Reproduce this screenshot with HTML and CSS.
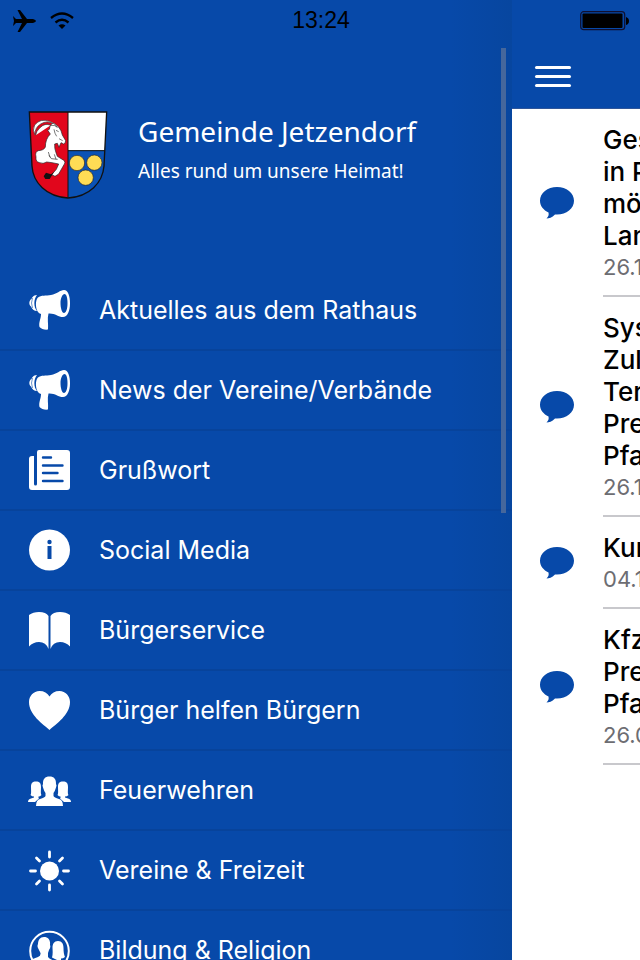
FILE: index.html
```html
<!DOCTYPE html>
<html lang="de">
<head>
    <meta charset="UTF-8">
    <meta name="viewport" content="width=device-width, initial-scale=1.0">
    <title>Gemeinde Jetzendorf</title>
    <link rel="stylesheet" href="styles.css">
</head>
<body>
    <!-- Icons, die mehrfach verwendet werden -->
    <svg class="sprite" aria-hidden="true">
        <symbol id="icon-megaphone" viewBox="0 0 42 42">
            <path fill="currentColor" fill-rule="evenodd" d="M36 1C32 1 29 5 23 6C18 7 13 6 10 8.500C7 11 7.500 20 10 23Q11 24.500 13 25C13 30 10.500 33 11.500 38C13 40 17 41 20 40.500C20.500 35 19 30 20.500 24.500C27 24 30 28 35 28C39.500 28 42 22 42 14.500C42 7 40 1 36 1ZM36.500 5C38.500 5 39.500 9 39.500 14.500C39.500 20 38 24 36 24C34 24 32.500 19 32.500 14C32.500 9 34.500 5 36.500 5Z"/>
            <path fill="currentColor" d="M9 6C5 6 4 9 3.500 10C1 11 .5 16 3 17.500C4 20 6 22 9 22C5.500 18 5.500 10 9 6Z"/>
            <path fill="none" stroke="#0749a9" stroke-width=".6" d="M4.500 9Q2.500 14 4.500 19"/>
        </symbol>
        <symbol id="icon-bubble" viewBox="0 0 34 32">
            <path fill="currentColor" d="M17 0C26.500 0 34 6 34 13.700C34 21.500 26.500 27.500 17 27.500H15C12 30.500 9 31.500 6.500 31.500C8.500 29.500 9 28 8.500 25.500C3.500 23 0 19 0 13.700C0 6 7.500 0 17 0Z"/>
        </symbol>
    </svg>

    <div class="statusbar">
        <div class="statusbar-left">
            <svg width="24" height="24" viewBox="0 0 24 24"><path d="M1 7L4 10H10L5.500 1H8L15 10H21Q24 11 24 12Q24 13 21 14H15L8 23H5.500L10 14H4L1 17L2 12Z"/></svg>
            <svg width="24" height="18" viewBox="0 0 24 18"><path d="M1 6Q12 -3 23 6M5.500 10.500Q12 5 18.500 10.500" fill="none" stroke="#000" stroke-width="2.300"/><path d="M8.500 13.500Q12 11 15.500 13.500L12 17Z"/></svg>
        </div>
        <time class="statusbar-time">13:24</time>
        <div class="statusbar-right">
            <svg width="50" height="20" viewBox="0 0 50 20"><rect x=".7" y=".7" width="44" height="18" rx="3" fill="none" stroke="#101030" stroke-width="1.200"/><rect x="2.500" y="2.500" width="40" height="14.500" rx="1"/><path d="M46 6Q49 7 49 10Q49 13 46 14Z"/></svg>
        </div>
    </div>

    <div class="app">
        <aside class="sidebar">
            <header class="brand">
                <svg class="crest" viewBox="40 35 240 264" role="img" aria-label="Wappen Jetzendorf">
                    <clipPath id="shield"><path d="M44 38H276L268 200C264 250 225 292 160 296C95 292 55 250 52 200Z"/></clipPath>
                    <g clip-path="url(#shield)">
                        <rect x="40" y="35" width="120" height="265" fill="#e1061c"/>
                        <rect x="160" y="35" width="120" height="119" fill="#fff"/>
                        <rect x="160" y="154" width="120" height="146" fill="#0b52b5"/>
                        <path d="M160 38V296M160 154H276" stroke="#111" stroke-width="3"/>
                    </g>
                    <g fill="#ffdc55" stroke="#222" stroke-width="2">
                        <circle cx="187" cy="191" r="23"/><circle cx="239" cy="190" r="23"/><circle cx="213" cy="235" r="23"/>
                    </g>
                    <!-- Steinbock -->
                    <path d="M104 90Q106 73 119 72L132 83Q141 94 143 107L153 124Q153 132 147 134L139 130L133 144L128 132L120 134Q119 148 124 160L128 171L149 184Q153 190 148 196L132 224L121 231L111 226L125 210L132 194L112 190L96 188Q85 195 75 190Q62 188 64 173Q60 157 71 154Q88 153 92 143Q92 119 107 104L99 93Z" fill="#fff" stroke="#222" stroke-width="2"/>
                    <path d="M115 73Q97 62 78 74Q60 85 61 106Q52 93 60 77Q77 56 105 66Q120 71 128 84Q120 76 108 78Q91 70 76 85Q64 96 63 108" fill="#fff" stroke="#333" stroke-width="2"/>
                    <path d="M87 231L94 220L109 225L118 218L105 239H92Z" fill="#111"/>
                    <path d="M103 168L110 178L129 180M124 93L132 97M133 118L144 124M118 90Q120 103 126 111M101 158L106 174M119 165L124 180" fill="none" stroke="#333" stroke-width="2"/>
                    <path d="M44 38H276L268 200C264 250 225 292 160 296C95 292 55 250 52 200Z" fill="none" stroke="#111" stroke-width="4"/>
                </svg>
                <div>
                    <h1 class="brand-name">Gemeinde Jetzendorf</h1>
                    <p class="brand-claim">Alles rund um unsere Heimat!</p>
                </div>
            </header>

            <nav class="menu">
                <a class="menu-item" href="#rathaus">
                    <svg class="menu-icon"><use href="#icon-megaphone"/></svg>
                    Aktuelles aus dem Rathaus
                </a>
                <a class="menu-item" href="#news">
                    <svg class="menu-icon"><use href="#icon-megaphone"/></svg>
                    News der Vereine/Verbände
                </a>
                <a class="menu-item" href="#grusswort">
                    <svg class="menu-icon" viewBox="0 0 42 42">
                        <path fill="currentColor" d="M11 1H39Q42 1 42 4V38Q42 41 39 41H4Q1 41 1 38V10Q1 7 4 7H6V35Q6 36.500 7.500 36.500Q9 36.500 9 35V3Q9 1 11 1Z"/>
                        <path d="M15 8.500H23M15 16.500H34.500M15 24H29.500M15 32H34.500" stroke="#0749a9" stroke-width="2.400" stroke-linecap="round"/>
                    </svg>
                    Grußwort
                </a>
                <a class="menu-item" href="#social">
                    <svg class="menu-icon" viewBox="0 0 42 42">
                        <circle cx="21.500" cy="21" r="20.500" fill="currentColor"/>
                        <path d="M19.500 17H23.500V30H19.500Z" fill="#0749a9"/>
                        <circle cx="21.500" cy="13" r="2.200" fill="#0749a9"/>
                    </svg>
                    Social Media
                </a>
                <a class="menu-item" href="#service">
                    <svg class="menu-icon" viewBox="0 0 42 42">
                        <path fill="currentColor" d="M1 6Q5 3 11 3Q18 3 20.500 7V40Q18 33 11 33Q5 33 1 37.500ZM42 6Q38 3 32 3Q25 3 22.500 7V40Q25 33 32 33Q38 33 42 37.500Z"/>
                    </svg>
                    Bürgerservice
                </a>
                <a class="menu-item" href="#helfen">
                    <svg class="menu-icon" viewBox="0 0 42 42">
                        <path fill="currentColor" d="M21.500 41C15 35 1 26 1 13C1 7 5.500 2 11.500 2C16 2 19.500 4 21.500 7.500C23.500 4 27 2 31.500 2C37.500 2 42 7 42 13C42 26 28 35 21.500 41Z"/>
                    </svg>
                    Bürger helfen Bürgern
                </a>
                <a class="menu-item" href="#feuerwehr">
                    <svg class="menu-icon" viewBox="0 0 42 42">
                        <g fill="currentColor">
                            <path d="M8 12.500C11.500 12.500 13 14 13 18C13 21 12.500 25 13.500 26Q12 27.500 10.500 27.500V29L11 29.500L7 33H0Q0 30 3 29.500L6 28.500V27.500Q4 27.500 2.500 26C3.500 25 3 21 3 18C3 14 4.500 12.500 8 12.500Z"/>
                            <path d="M35 12.500C38.500 12.500 40 14 40 18C40 21 39.500 25 40.500 26Q39 27.500 37 27.500V28.500L40 29.500Q43 30 43 33H36L32 29.500L32.500 29V27.500Q31 27.500 29.500 26C30.500 25 30 21 30 18C30 14 31.500 12.500 35 12.500Z"/>
                            <path d="M21.500 7.500C26 7.500 28.300 10 28 15Q29 16 28 18.500Q27 22 25.500 24V27Q26 28.500 31 30Q35 31 35 37H8Q8 31 12 30Q17 28.500 17.500 27V24Q16 22 15 18.500Q14 16 15 15C14.700 10 17 7.500 21.500 7.500Z"/>
                        </g>
                    </svg>
                    Feuerwehren
                </a>
                <a class="menu-item" href="#vereine">
                    <svg class="menu-icon" viewBox="0 0 42 42">
                        <circle cx="21.500" cy="22" r="9.500" fill="currentColor"/>
                        <path d="M21.500 3V8M21.500 36V41M2.500 22H7.500M35.500 22H40.500M8.500 9L11.500 12M31.500 32L34.500 35M34.500 9L31.500 12M11.500 32L8.500 35" stroke="currentColor" stroke-width="2.800" stroke-linecap="round"/>
                    </svg>
                    Vereine &amp; Freizeit
                </a>
                <a class="menu-item" href="#bildung">
                    <svg class="menu-icon" viewBox="0 0 42 42">
                        <clipPath id="round"><circle cx="21.500" cy="22" r="19"/></clipPath>
                        <circle cx="21.500" cy="22" r="19.300" fill="none" stroke="currentColor" stroke-width="2"/>
                        <g fill="currentColor" clip-path="url(#round)">
                            <path d="M16 8C20.500 8 22.500 11 22 16Q23 18 21 21L20 24V28Q21 30 27 32V42H2V31L10 28Q13 27 12.500 24Q11 21 10 19Q9 17 10 15C10 11 12 8 16 8Z"/>
                            <path d="M30 12C34 12 35.500 15 35.500 19C35.500 23 36 26 37 28Q35 29.500 33 29.500V31L40 34V42H29V31L24 28.500Q25 26 24.500 19C24.500 15 26 12 30 12Z"/>
                        </g>
                    </svg>
                    Bildung &amp; Religion
                </a>
            </nav>
            <div class="scrollbar"></div>
        </aside>

        <main class="page">
            <header class="page-header">
                <button class="menu-toggle" type="button" aria-label="Menü">
                    <span></span>
                    <span></span>
                    <span></span>
                </button>
            </header>
            <article class="entry">
                <svg class="entry-icon"><use href="#icon-bubble"/></svg>
                <div class="entry-text">
                    <h2>Ges<br>in P<br>mö<br>Lan</h2>
                    <time>26.1</time>
                </div>
            </article>
            <article class="entry">
                <svg class="entry-icon"><use href="#icon-bubble"/></svg>
                <div class="entry-text">
                    <h2>Sys<br>Zul<br>Ter<br>Pre<br>Pfa</h2>
                    <time>26.1</time>
                </div>
            </article>
            <article class="entry">
                <svg class="entry-icon"><use href="#icon-bubble"/></svg>
                <div class="entry-text">
                    <h2>Kur</h2>
                    <time>04.1</time>
                </div>
            </article>
            <article class="entry">
                <svg class="entry-icon"><use href="#icon-bubble"/></svg>
                <div class="entry-text">
                    <h2>Kfz<br>Pre<br>Pfa</h2>
                    <time>26.0</time>
                </div>
            </article>
        </main>
    </div>
</body>
</html>
```
FILE: styles.css
```css
* {
    box-sizing: border-box;
}
body {
    margin: 0;
    font-family: Inter, "Liberation Sans", sans-serif;
    background: #fff;
}
h1, h2, p {
    margin: 0;
    font-weight: 400;
}
.sprite {
    position: absolute;
    width: 0;
    height: 0;
}

/* Statusleiste liegt über Menü und Seite */
.statusbar {
    position: absolute;
    top: 0;
    left: 0;
    right: 0;
    z-index: 2;
    display: grid;
    grid-template-columns: 1fr auto 1fr;
    align-items: center;
    height: 41px;
    padding: 0 10px 0 12px;
    color: #000;
}
.statusbar-left {
    display: flex;
    align-items: center;
    gap: 14px;
}
.statusbar-time {
    font-family: "Liberation Sans", sans-serif;
    font-size: 23px;
}
.statusbar-right {
    display: flex;
    justify-content: flex-end;
}

.app {
    display: grid;
    grid-template-columns: 4fr 1fr;
    height: 100vh;
    overflow: hidden;
}

/* Seitenmenü */
.sidebar {
    position: relative;
    overflow: hidden;
    color: #fff;
    background: linear-gradient(to right, #0749a9 88%, #07469f);
}
.brand {
    display: flex;
    gap: 30px;
    height: 271px;
    padding: 111px 28px 0;
    font-family: "Noto Sans", sans-serif;
    white-space: nowrap;
}
.crest {
    width: 80px;
    height: 88px;
}
.brand-name {
    font-size: 28px;
    line-height: 40px;
}
.brand-claim {
    font-size: 19px;
    line-height: 40px;
}
.menu-item {
    display: flex;
    align-items: center;
    gap: 29px;
    height: 80px;
    padding: 0 28px;
    border-bottom: 2px solid #07439b;
    font-size: 25px;
    color: #fff;
    text-decoration: none;
    white-space: nowrap;
}
.menu-icon {
    flex: none;
    width: 42px;
    height: 42px;
    overflow: visible;
}
.scrollbar {
    position: absolute;
    top: 48px;
    right: 6px;
    width: 5px;
    height: 465px;
    background: #45679c;
}

/* Seite rechts */
.page {
    overflow: hidden;
    background: #fff;
}
.page-header {
    height: 109px;
    padding: 62px 20px 0;
    background: #0749a9;
    border-bottom: 1px solid #2f569a;
}
.menu-toggle {
    display: flex;
    flex-direction: column;
    gap: 6px;
    padding: 4px 3px;
    border: 0;
    background: none;
}
.menu-toggle span {
    width: 36px;
    height: 3px;
    border-radius: 2px;
    background: #fff;
}
.entry {
    display: flex;
    align-items: center;
    gap: 29px;
    padding-left: 28px;
}
.entry-icon {
    flex: none;
    width: 34px;
    height: 32px;
    color: #0749a9;
}
.entry-text {
    flex: 1;
    padding: 15px 0 13px;
    border-bottom: 2px solid #c8c8cc;
    white-space: nowrap;
}
.entry h2 {
    font-size: 26px;
    font-weight: 500;
    line-height: 32px;
    color: #000;
}
.entry time {
    display: block;
    font-size: 22px;
    line-height: 30px;
    color: #6d6d72;
}
```
